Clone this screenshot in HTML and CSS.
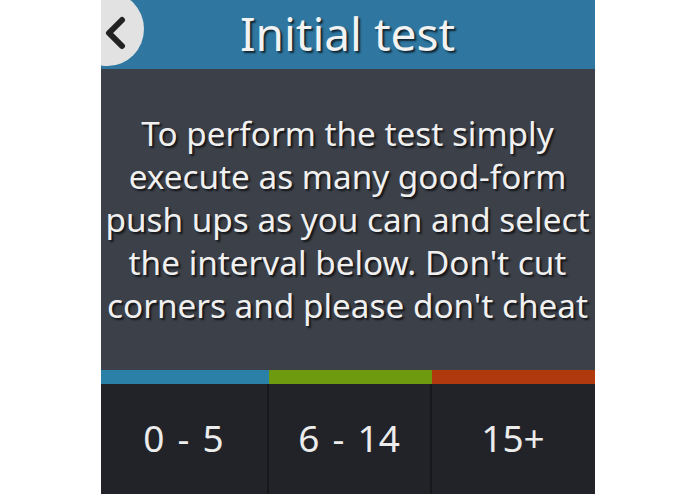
FILE: index.html
```html
<!DOCTYPE html>
<html>
<head>
<meta charset="utf-8">
<link rel="stylesheet" href="styles.css">
</head>
<body>
<div class="panel">
  <header class="header">
    <div class="back">
      <svg width="26" height="34" viewBox="0 0 26 34"><path d="M20 4 L7 17 L20 30" fill="none" stroke="#222" stroke-width="6" stroke-linecap="round" stroke-linejoin="round"/></svg>
    </div>
    <h1 class="title">Initial test</h1>
  </header>
  <main class="body">
    <p class="text">To perform the test simply<br>execute as many good-form<br>push ups as you can and select<br>the interval below. Don't cut<br>corners and please don't cheat</p>
  </main>
  <div class="bars">
    <div class="bar blue"></div>
    <div class="bar green"></div>
    <div class="bar orange"></div>
  </div>
  <div class="buttons">
    <div class="btn">0 - 5</div>
    <div class="btn">6 - 14</div>
    <div class="btn">15+</div>
  </div>
</div>
</body>
</html>
```
FILE: styles.css
```css
html, body { margin: 0; padding: 0; background: #fff; }
body { font-family: "Noto Sans", "Open Sans", sans-serif; }
.panel {
  width: 494px;
  height: 494px;
  margin: 0 auto;
  display: flex;
  flex-direction: column;
  overflow: hidden;
}
.header {
  position: relative;
  height: 69px;
  background: #2f77a0;
  display: flex;
  align-items: center;
  justify-content: center;
}
.back {
  position: absolute;
  left: -30px;
  top: -8px;
  width: 73px;
  height: 74px;
  border-radius: 50%;
  background: #e2e2e2;
  display: flex;
  align-items: center;
  justify-content: flex-end;
  padding-right: 16px;
  box-sizing: border-box;
}
.back svg { margin-top: 8px; }
.title {
  margin: 0;
  font-weight: 400;
  font-size: 46px;
  color: #f2f2f2;
  text-shadow: 2px 2px 2px rgba(0,0,0,0.7);
  line-height: 1;
  margin-top: -3px;
}
.body {
  flex: 1;
  background: #3c4049;
  display: flex;
  align-items: center;
  justify-content: center;
}
.text {
  margin: 0;
  text-align: center;
  color: #f0f0f0;
  font-size: 33.3px;
  line-height: 43px;
  text-shadow: 2px 2px 2px rgba(0,0,0,0.7);
  white-space: nowrap;
}
.bars { display: flex; height: 14px; }
.bar.blue { width: 168px; background: #2a80a6; }
.bar.green { width: 163px; background: #6e9a10; }
.bar.orange { flex: 1; background: #b03a0e; }
.buttons {
  height: 110px;
  display: flex;
  background: #212329;
}
.btn {
  display: flex;
  align-items: center;
  justify-content: center;
  color: #ececec;
  font-size: 37px;
  word-spacing: 3.5px;
  padding-bottom: 4px;
  box-sizing: border-box;
}
.btn:nth-child(1) { width: 168px; border-right: 2px solid #17181c; }
.btn:nth-child(2) { width: 163px; border-right: 2px solid #17181c; }
.btn:nth-child(3) { flex: 1; }
```
